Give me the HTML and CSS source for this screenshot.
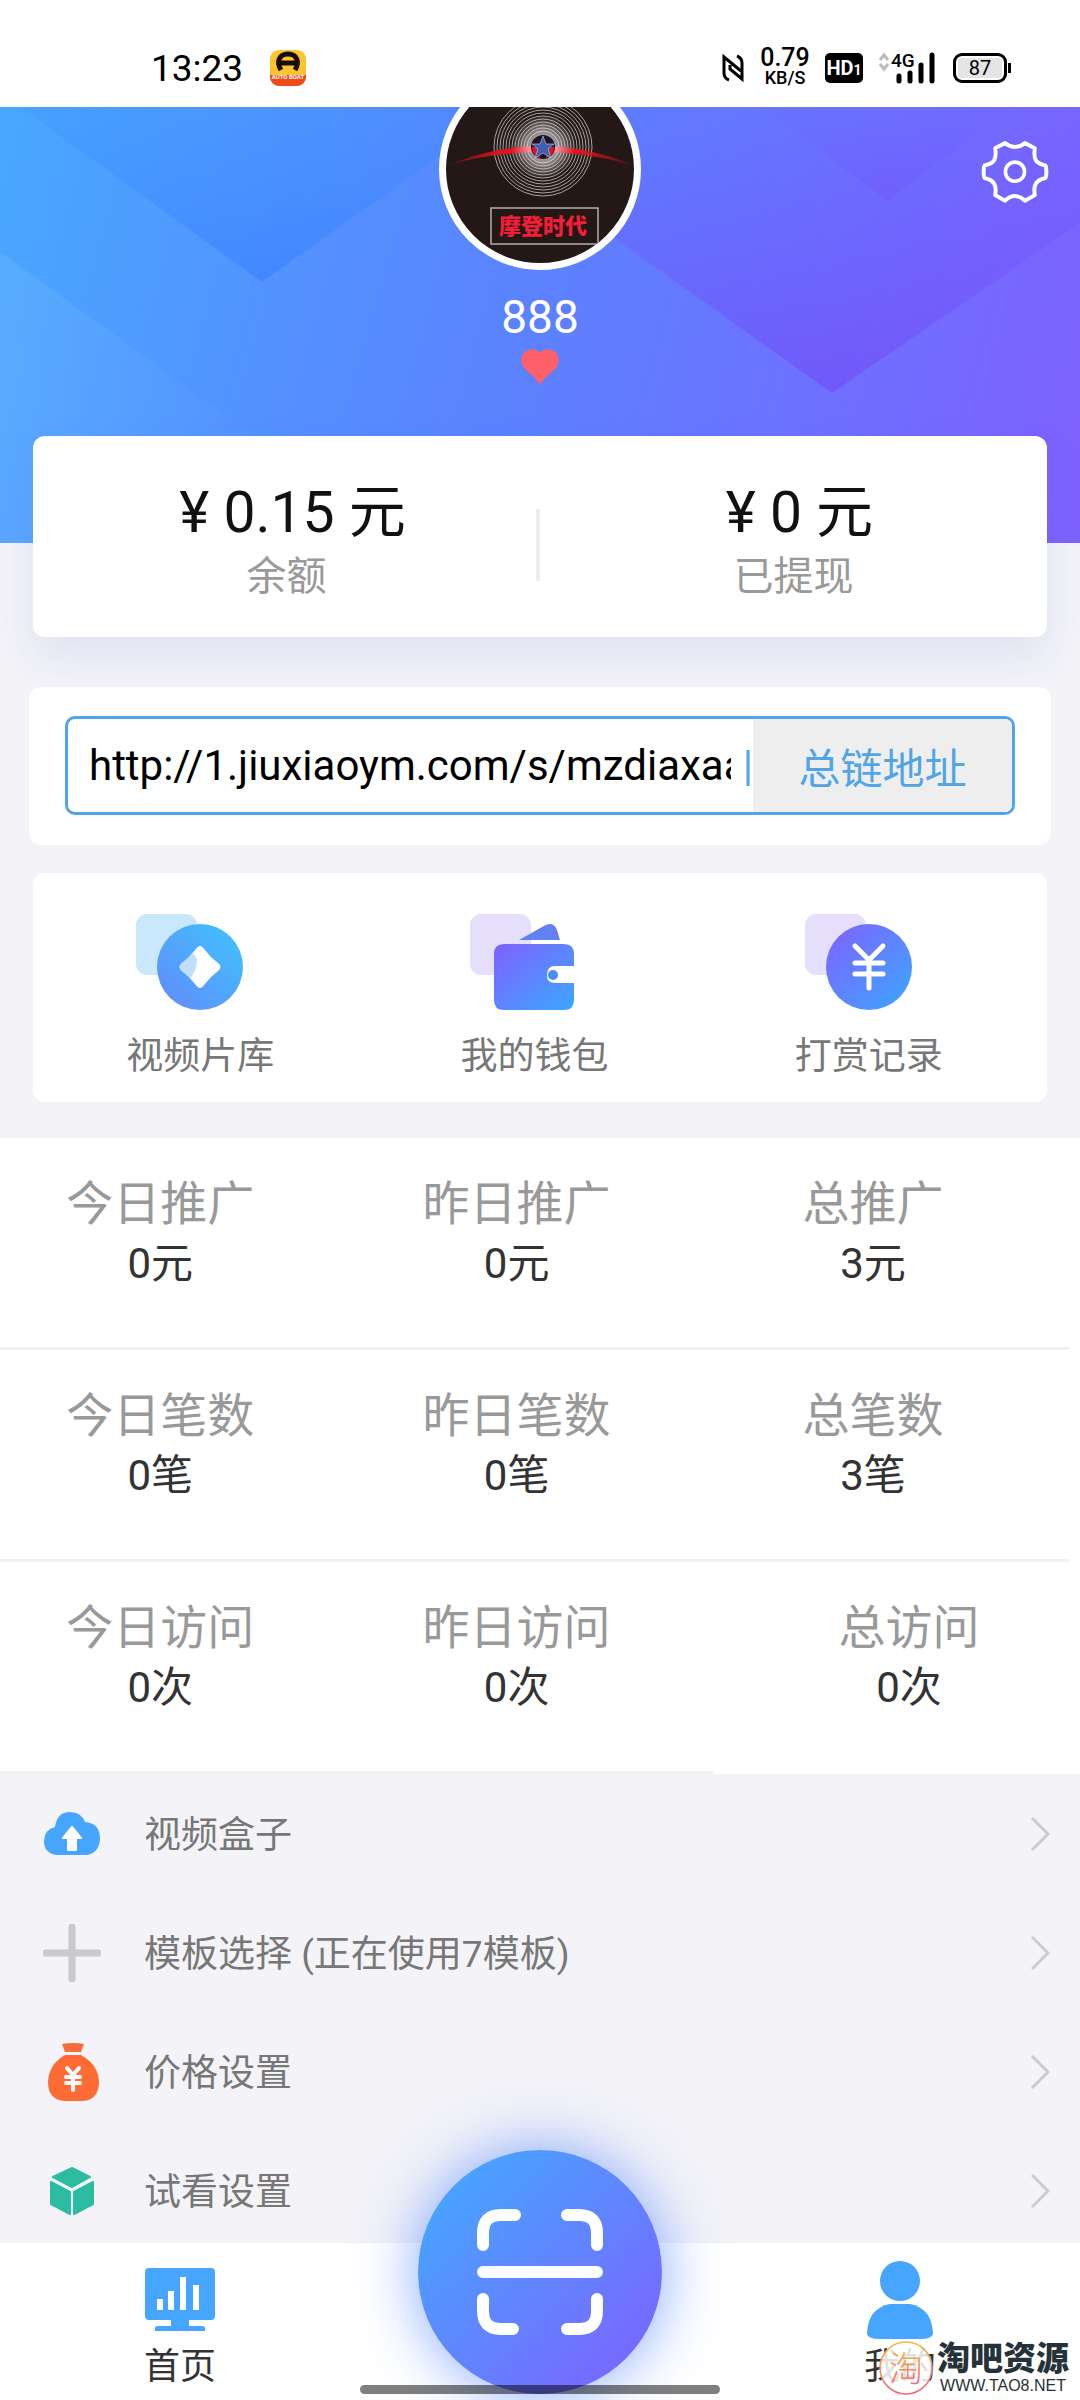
FILE: index.html
```html
<!DOCTYPE html>
<html lang="zh-CN">
<head>
    <meta charset="UTF-8">
    <meta name="viewport" content="width=device-width, initial-scale=1.0">
    <title>我的</title>
    <link rel="stylesheet" href="styles.css">
</head>
<body>
    <header class="status-bar">
        <span class="time">13:23</span>
        <svg class="app-icon" viewBox="0 0 36 36">
            <rect width="36" height="36" rx="9" fill="#fdc52c"/>
            <path d="M0 25h36v2a9 9 0 0 1-9 9H9a9 9 0 0 1-9-9z" fill="#f04a1c"/>
            <path d="M11 20C6 12 9 4 18 4s12 8 7 16M11 13h14" fill="none" stroke="#1a0d08" stroke-width="5"/>
            <text x="18" y="29" text-anchor="middle" class="app-name">AUTO BOAT</text>
        </svg>
        <svg class="nfc" viewBox="0 0 24 30">
            <path d="M8 27Q3 25 3 20V4L20 18M16 3Q21 5 21 10V26L9 16V12" fill="none" stroke="#000" stroke-width="3"/>
        </svg>
        <span class="speed"><b>0.79</b><small>KB/S</small></span>
        <span class="hd">HD<small>1</small></span>
        <svg class="signal" viewBox="0 -8 58 48">
            <path d="M1 8l4-5 4 5M1 12l4 5 4-5" fill="none" stroke="#bbb" stroke-width="3"/>
            <path d="M20 24v5M31 21v8M42 13v16M53 3v26" stroke="#000" stroke-width="5" stroke-linecap="round"/>
            <text x="12" y="15" class="net-type">4G</text>
        </svg>
        <span class="battery">87</span>
    </header>

    <main class="page">
        <section class="hero">
            <svg class="hero-bg" viewBox="0 0 1080 436" preserveAspectRatio="none">
                <defs>
                    <linearGradient id="heroBase" x1="0" y1="0" x2="1080" y2="300" gradientUnits="userSpaceOnUse">
                        <stop offset="0" stop-color="#48a8ff"/>
                        <stop offset=".5" stop-color="#5b82ff"/>
                        <stop offset="1" stop-color="#7d62ff"/>
                    </linearGradient>
                    <linearGradient id="foldBlue" x1="0" y1="0" x2="0" y2="1">
                        <stop offset="0" stop-color="#3a8cff" stop-opacity=".2"/>
                        <stop offset="1" stop-color="#2f78ff" stop-opacity=".45"/>
                    </linearGradient>
                    <linearGradient id="foldPurple" x1="0" y1="0" x2="0" y2="1">
                        <stop offset="0" stop-color="#6a52ff" stop-opacity=".05"/>
                        <stop offset="1" stop-color="#7444f5" stop-opacity=".55"/>
                    </linearGradient>
                    <linearGradient id="foldLight" x1="0" y1="0" x2="1" y2="0">
                        <stop offset="0" stop-color="#fff" stop-opacity=".08"/>
                        <stop offset="1" stop-color="#fff" stop-opacity="0"/>
                    </linearGradient>
                </defs>
                <rect width="1080" height="436" fill="url(#heroBase)"/>
                <path d="M20 0L262 175 480 20V0z" fill="url(#foldBlue)"/>
                <path d="M430 0L832 286 1080 116V0z" fill="url(#foldPurple)"/>
                <path d="M760 0L888 94 1010 0z" fill="url(#foldPurple)" opacity=".5"/>
                <path d="M0 145L270 340V436H0z" fill="url(#foldLight)"/>
            </svg>
            <div class="avatar">
                <svg viewBox="0 0 188 188">
                    <defs>
                        <radialGradient id="glow">
                            <stop offset=".2" stop-color="#fff" stop-opacity=".75"/>
                            <stop offset="1" stop-color="#fff" stop-opacity="0"/>
                        </radialGradient>
                        <linearGradient id="beam">
                            <stop offset="0" stop-color="#e60f1e" stop-opacity=".2"/>
                            <stop offset=".3" stop-color="#e60f1e"/>
                            <stop offset=".7" stop-color="#e60f1e"/>
                            <stop offset="1" stop-color="#e60f1e" stop-opacity=".2"/>
                        </linearGradient>
                    </defs>
                    <g fill="none" stroke="#a8a3a1" stroke-width="1">
                        <circle cx="97" cy="72" r="49"/><circle cx="97" cy="72" r="46"/>
                        <circle cx="97" cy="72" r="43"/><circle cx="97" cy="72" r="40"/>
                        <circle cx="97" cy="72" r="37"/><circle cx="97" cy="72" r="34"/>
                        <circle cx="97" cy="72" r="31"/><circle cx="97" cy="72" r="28"/>
                        <circle cx="97" cy="72" r="25"/><circle cx="97" cy="72" r="22"/>
                        <circle cx="97" cy="72" r="19"/><circle cx="97" cy="72" r="16"/>
                    </g>
                    <path d="M2 90Q97 52 186 90Q97 64 2 90z" fill="url(#beam)"/>
                    <circle cx="97" cy="72" r="32" fill="url(#glow)"/>
                    <circle cx="97" cy="72" r="12" fill="#1d1424"/>
                    <path d="M86 72q0 9 8 11l-2-11zM108 72q0 9-8 11l2-11z" fill="#d81430"/>
                    <path d="M97 61l3 8h8l-6 5 3 9-8-5-8 5 3-9-6-5h8z" fill="#3d5fae" stroke="#c8cfe0" stroke-width=".6"/>
                    <rect x="45" y="133" width="107" height="36" fill="none" stroke="#b5aeac" stroke-width="1.5"/>
                    <text x="97" y="159" text-anchor="middle" class="avatar-text">摩登时代</text>
                </svg>
            </div>
            <div class="nickname">888</div>
            <svg class="heart" viewBox="0 0 38 36">
                <path d="M19 36Q15 29 6 22C-1 16-1 8 3 4C8-1 15-1 19 4C23-1 30-1 35 4C39 8 39 16 32 22Q23 29 19 36z" fill="#ff5f68"/>
            </svg>
            <button class="settings" aria-label="设置">
                <svg viewBox="0 0 212 200">
                    <path d="M76 12Q90 24 106 24Q122 24 136 12L166 28Q162 54 170 66Q178 76 198 80Q201 84 201 99Q201 114 198 118Q178 122 170 134Q162 146 166 170L136 187Q122 173 106 173Q90 173 76 187L46 170Q50 146 42 134Q34 122 14 118Q11 114 11 99Q11 84 14 80Q34 76 42 66Q50 54 46 28z" fill="none" stroke="#fff" stroke-width="12" stroke-linejoin="round"/>
                    <circle cx="106" cy="99" r="29" fill="none" stroke="#fff" stroke-width="11"/>
                </svg>
            </button>
        </section>

        <section class="balance">
            <div class="balance-item">
                <strong>¥ 0.15 元</strong>
                <span>余额</span>
            </div>
            <div class="balance-item">
                <strong>¥ 0 元</strong>
                <span>已提现</span>
            </div>
        </section>

        <section class="link-card">
            <div class="link-box">
                <input type="text" aria-label="总链地址" value="http://1.jiuxiaoym.com/s/mzdiaxaa" readonly>
                <span class="bar">|</span>
                <button>总链地址</button>
            </div>
        </section>

        <nav class="shortcuts">
            <a href="#">
                <svg viewBox="0 0 110 100">
                    <defs>
                        <linearGradient id="icoBlue" x1="1" y1="0" x2="0" y2="1">
                            <stop offset="0" stop-color="#3fc4fd"/>
                            <stop offset="1" stop-color="#6389fb"/>
                        </linearGradient>
                        <linearGradient id="icoPurple" x1="0" y1="0" x2="1" y2="1">
                            <stop offset="0" stop-color="#8160ff"/>
                            <stop offset="1" stop-color="#3ba8ff"/>
                        </linearGradient>
                    </defs>
                    <rect x="1" y="2" width="61" height="61" rx="11" fill="#c9e8fc"/>
                    <circle cx="65" cy="55" r="43" fill="url(#icoBlue)"/>
                    <path d="M65 34Q67 34 70 38Q75 45 83 51Q88 55 83 59Q75 65 70 72Q67 76 65 76Q63 76 60 72Q55 65 47 59Q42 55 47 51Q55 45 60 38Q63 34 65 34z" fill="#fff"/>
                    <path d="M58 41Q53 46 47 51Q42 55 47 59Q51 62 55 66Q62 60 62 47z" fill="#bfe0fd"/>
                </svg>
                视频片库
            </a>
            <a href="#">
                <svg viewBox="0 0 110 100">
                    <rect x="1" y="2" width="61" height="61" rx="11" fill="#e5dffc"/>
                    <path d="M50 28L73 15Q84 8 88 18L91 28z" fill="#6281f5"/>
                    <path d="M35 32H95Q105 32 105 42V54H86Q78 54 78 63Q78 71 86 71H105V88Q105 98 95 98H35Q25 98 25 88V42Q25 32 35 32z" fill="url(#icoPurple)"/>
                    <rect x="62" y="28" width="36" height="4" fill="#fff"/>
                    <circle cx="84" cy="63" r="5" fill="#4b8df8"/>
                </svg>
                我的钱包
            </a>
            <a href="#">
                <svg viewBox="0 0 110 100">
                    <rect x="1" y="2" width="61" height="61" rx="11" fill="#e5dffc"/>
                    <circle cx="65" cy="55" r="43" fill="url(#icoPurple)"/>
                    <path d="M51 34L65 48 79 34M51 51H79M51 62H79M65 48V76" fill="none" stroke="#fff" stroke-width="5" stroke-linecap="round"/>
                </svg>
                打赏记录
            </a>
        </nav>

        <section class="stats">
            <div class="stat"><span>今日推广</span><b>0元</b></div>
            <div class="stat"><span>昨日推广</span><b>0元</b></div>
            <div class="stat"><span>总推广</span><b>3元</b></div>
            <div class="stat"><span>今日笔数</span><b>0笔</b></div>
            <div class="stat"><span>昨日笔数</span><b>0笔</b></div>
            <div class="stat"><span>总笔数</span><b>3笔</b></div>
            <div class="stat"><span>今日访问</span><b>0次</b></div>
            <div class="stat"><span>昨日访问</span><b>0次</b></div>
            <div class="stat"><span>总访问</span><b>0次</b></div>
        </section>

        <nav class="menu">
            <a href="#">
                <svg class="menu-icon" viewBox="0 0 58 58">
                    <path d="M13 50Q1 48 1 36Q2 24 12 22Q14 7 27 7Q38 7 42 17Q57 18 57 34Q56 48 44 50z" fill="#46a5ff"/>
                    <path d="M29 22L38 33H33V45H25V33H20z" fill="#fff" stroke="#fff" stroke-width="2" stroke-linejoin="round"/>
                </svg>
                <span>视频盒子</span>
                <svg class="arrow" viewBox="0 0 20 36"><path d="M2 2L18 18 2 34"/></svg>
            </a>
            <a href="#">
                <svg class="menu-icon" viewBox="0 0 58 58">
                    <path d="M29 3V55M3 29H55" stroke="#cacacc" stroke-width="7" stroke-linecap="round"/>
                </svg>
                <span>模板选择 (正在使用7模板)</span>
                <svg class="arrow" viewBox="0 0 20 36"><path d="M2 2L18 18 2 34"/></svg>
            </a>
            <a href="#">
                <svg class="menu-icon" viewBox="0 0 58 58">
                    <path d="M19 1Q30-1 41 1L38 9H22z" fill="#f96c39"/>
                    <path d="M22 12H38Q56 22 56 40Q55 58 38 58H22Q5 57 5 39Q6 21 22 12z" fill="#fe6b35"/>
                    <path d="M24 25L30 32 36 25M23 34H37M23 40H37M30 32V47" fill="none" stroke="#fff" stroke-width="4" stroke-linecap="round"/>
                </svg>
                <span>价格设置</span>
                <svg class="arrow" viewBox="0 0 20 36"><path d="M2 2L18 18 2 34"/></svg>
            </a>
            <a href="#">
                <svg class="menu-icon" viewBox="0 0 58 58">
                    <path d="M29 6L47 15 29 25 10 15zM8 20L27 30V52L8 42zM50 20L31 30V52L50 42z" fill="#2cbca2" stroke="#2cbca2" stroke-width="2" stroke-linejoin="round"/>
                </svg>
                <span>试看设置</span>
                <svg class="arrow" viewBox="0 0 20 36"><path d="M2 2L18 18 2 34"/></svg>
            </a>
        </nav>
    </main>

    <nav class="tabbar">
        <a href="#">
            <svg viewBox="0 0 80 80">
                <rect x="5" y="8" width="70" height="52" rx="4" fill="#46a5ff"/>
                <path d="M31 60H49V66H62Q65 66 65 68V71H15V68Q15 66 18 66H31z" fill="#46a5ff"/>
                <path d="M20 50V39M31 50V31M43 50V17M56 50V25" stroke="#fff" stroke-width="6"/>
            </svg>
            首页
        </a>
        <div class="scan-slot">
            <button class="scan" aria-label="扫一扫">
                <svg viewBox="0 0 126 126">
                    <path d="M6 36V24Q6 6 24 6H38M90 6H102Q120 6 120 24V36M6 90V102Q6 120 24 120H36M90 120H102Q120 120 120 102V90M6 63H120" fill="none" stroke="#fff" stroke-width="12" stroke-linecap="round"/>
                </svg>
            </button>
        </div>
        <a href="#">
            <svg viewBox="0 0 80 80">
                <circle cx="40" cy="21" r="20" fill="#46a5ff"/>
                <path d="M30 44H50Q72 48 73 74Q72 79 60 79H20Q8 79 7 74Q8 48 30 44z" fill="#46a5ff"/>
            </svg>
            我的
        </a>
        <div class="home-indicator"></div>
        <div class="watermark">
            <svg viewBox="0 0 56 56">
                <defs>
                    <linearGradient id="seal" x1="0" y1="0" x2="0" y2="1">
                        <stop offset="0" stop-color="#f6b53c"/>
                        <stop offset="1" stop-color="#f0627e"/>
                    </linearGradient>
                </defs>
                <circle cx="28" cy="28" r="26" fill="#fff" fill-opacity=".85" stroke="url(#seal)" stroke-width="1.5"/>
                <text x="28" y="41" text-anchor="middle" class="seal-text">淘</text>
            </svg>
            <div class="watermark-text">
                <strong>淘吧资源</strong>
                <span>WWW.TAO8.NET</span>
            </div>
        </div>
    </nav>
</body>
</html>
```

FILE: styles.css
```css
* {
    box-sizing: border-box;
}

body {
    font-family: Roboto, "Noto Sans CJK SC", sans-serif;
    display: flex;
    flex-direction: column;
    height: 100vh;
    margin: 0;
    background-color: #f3f3f8;
    color: #333;
}

a {
    color: inherit;
    text-decoration: none;
}

button {
    border: none;
    padding: 0;
    font-family: inherit;
    cursor: pointer;
}

svg {
    display: block;
}

/* 状态栏 */
.status-bar {
    display: flex;
    flex-shrink: 0;
    align-items: center;
    height: 107px;
    padding: 29px 73px 0 151px;
    background-color: white;
    color: #000;
}

.time {
    font-size: 37px;
}

.app-icon {
    width: 36px;
    margin-left: 27px;
    margin-right: auto;
}

.app-name {
    font-size: 6px;
    font-weight: bold;
    fill: #fff;
}

.nfc {
    width: 24px;
    height: 30px;
}

.speed {
    width: 50px;
    margin: 0 15px;
    text-align: center;
}

.speed b,
.speed small {
    display: block;
    font-size: 25px;
    font-weight: 500;
    line-height: 20px;
}

.speed small {
    font-size: 18px;
}

.hd {
    width: 38px;
    height: 30px;
    border-radius: 5px;
    background-color: #000;
    color: white;
    font-size: 20px;
    font-weight: bold;
    line-height: 30px;
    text-align: center;
}

.hd small {
    font-size: 14px;
}

.signal {
    width: 58px;
    height: 48px;
    margin: 0 16px;
}

.net-type {
    font-size: 19px;
    font-weight: 500;
}

.battery {
    position: relative;
    width: 54px;
    height: 30px;
    border: 3px solid #000;
    border-radius: 9px;
    background-color: #e4e4e4;
    box-shadow: inset 0 0 0 2px white;
    font-size: 20px;
    line-height: 24px;
    text-align: center;
}

.battery::after {
    content: "";
    position: absolute;
    top: 7px;
    right: -7px;
    width: 3px;
    height: 10px;
    background-color: #000;
}

.page {
    flex: 1;
    min-height: 0;
    overflow-y: auto;
    scrollbar-width: none;
}

/* 头部 */
.hero {
    position: relative;
    display: flex;
    flex-direction: column;
    align-items: center;
    height: 436px;
    overflow: hidden;
}

.hero-bg {
    position: absolute;
    top: 0;
    left: 0;
    width: 100%;
    height: 100%;
}

.avatar {
    position: relative;
    flex-shrink: 0;
    width: 202px;
    height: 202px;
    margin-top: -39px;
    border: 7px solid white;
    border-radius: 50%;
    background-color: #231815;
    overflow: hidden;
}

.avatar-text {
    font-size: 22px;
    font-weight: 900;
    fill: #f51d3a;
}

.nickname {
    position: relative;
    margin-top: 21px;
    color: white;
    font-size: 46px;
    line-height: 52px;
}

.heart {
    position: relative;
    width: 38px;
    height: 36px;
    margin-top: 6px;
}

.settings {
    position: absolute;
    top: 32px;
    right: 30px;
    background: none;
}

.settings svg {
    width: 70px;
    height: 66px;
}

/* 余额 */
.balance {
    position: relative;
    display: flex;
    height: 201px;
    margin: -107px 33px 0;
    padding-top: 45px;
    border-radius: 12px;
    background-color: white;
    box-shadow: 0 20px 40px rgba(80, 110, 200, 0.12);
}

.balance-item {
    flex: 1;
    text-align: center;
}

.balance-item + .balance-item {
    position: relative;
}

.balance-item + .balance-item::before {
    content: "";
    position: absolute;
    top: 28px;
    left: -4px;
    width: 4px;
    height: 72px;
    background-color: #eee;
}

.balance strong,
.balance span {
    display: block;
    color: #111;
    font-size: 57px;
    font-weight: normal;
    line-height: 64px;
}

.balance strong {
    padding-left: 12px;
}

.balance span {
    color: #999;
    font-size: 40px;
}

/* 总链地址 */
.link-card {
    margin: 50px 29px 28px;
    padding: 29px 36px 30px;
    border-radius: 12px;
    background-color: white;
}

.link-box {
    display: flex;
    align-items: center;
    height: 99px;
    padding-left: 21px;
    border: 3px solid #51a5e6;
    border-radius: 10px;
    overflow: hidden;
}

.link-box input {
    flex: 1;
    min-width: 0;
    padding: 0;
    border: none;
    outline: none;
    background: none;
    color: #000;
    font-family: inherit;
    font-size: 42px;
}

.bar {
    width: 22px;
    color: #51a5e6;
    font-size: 42px;
    text-align: right;
}

.link-box button {
    align-self: stretch;
    width: 259px;
    background-color: #eee;
    color: #51a5e6;
    font-size: 42px;
}

/* 快捷入口 */
.shortcuts {
    display: flex;
    margin: 0 33px 36px;
    padding: 39px 11px 19px 0;
    border-radius: 12px;
    background-color: white;
}

.shortcuts a {
    display: flex;
    flex: 1;
    flex-direction: column;
    align-items: center;
    gap: 19px;
    color: #777;
    font-size: 37px;
    line-height: 52px;
}

.shortcuts svg {
    width: 110px;
    height: 100px;
    margin-right: 20px;
}

/* 数据统计 */
.stats {
    display: grid;
    grid-template-columns: repeat(3, 33%);
    background-color: white;
}

.stat {
    height: 212px;
    padding-top: 36px;
    padding-right: 36px;
    border-bottom: 3px solid #f1f1f2;
    text-align: center;
}

.stat:last-child {
    padding-right: 0;
    padding-left: 36px;
    border-bottom: none;
}

.stat span,
.stat b {
    display: block;
    color: #999;
    font-size: 47px;
    font-weight: normal;
    line-height: 60px;
}

.stat b {
    color: #333;
    font-size: 42px;
}

/* 菜单 */
.menu a {
    display: flex;
    align-items: center;
    height: 119px;
    padding: 0 30px 0 43px;
    color: #777;
    font-size: 37px;
}

.menu span {
    flex: 1;
    margin-left: 43px;
    padding-bottom: 4px;
}

.menu-icon {
    width: 58px;
    height: 58px;
}

.arrow {
    width: 20px;
    height: 36px;
}

.arrow path {
    fill: none;
    stroke: #ccc;
    stroke-width: 3;
}

/* 底部导航 */
.tabbar {
    position: relative;
    display: flex;
    flex-shrink: 0;
    height: 157px;
    padding-top: 17px;
    background-color: white;
}

.tabbar > a,
.scan-slot {
    display: flex;
    flex: 1;
    flex-direction: column;
    align-items: center;
    font-size: 36px;
    line-height: 54px;
}

.tabbar > a svg {
    width: 80px;
    height: 80px;
}

.scan {
    position: absolute;
    top: -93px;
    display: flex;
    align-items: center;
    justify-content: center;
    width: 244px;
    height: 244px;
    border-radius: 50%;
    background: linear-gradient(135deg, #46a5ff 10%, #7a66ff 90%);
    box-shadow: 0 0 60px rgba(80, 130, 255, 0.7);
}

.scan svg {
    width: 126px;
    height: 126px;
}

.home-indicator {
    position: absolute;
    bottom: 6px;
    left: calc(100% / 3);
    right: calc(100% / 3);
    height: 9px;
    border-radius: 5px;
    background-color: rgba(0, 0, 0, 0.5);
}

.watermark {
    position: absolute;
    right: 11px;
    bottom: 4px;
    display: flex;
    align-items: center;
    gap: 3px;
}

.watermark svg {
    width: 56px;
    height: 56px;
}

.watermark-text {
    text-align: center;
}

.watermark strong,
.watermark span {
    display: block;
    color: #26323a;
    font-size: 33px;
    font-weight: 900;
    line-height: 36px;
}

.watermark span {
    font-family: "Liberation Sans", sans-serif;
    font-size: 16px;
    font-weight: normal;
    line-height: 18px;
}

.seal-text {
    font-size: 34px;
    font-weight: 300;
    fill: url(#seal);
}
```
